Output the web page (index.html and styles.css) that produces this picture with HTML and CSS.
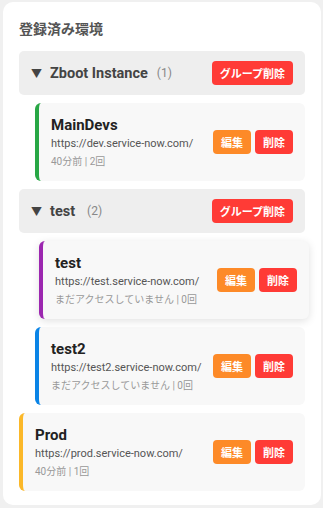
FILE: index.html
```html
<!DOCTYPE html>
<html lang="ja">
<head>
<meta charset="utf-8">
<link rel="stylesheet" href="styles.css">
</head>
<body>
<div class="card">
  <h2 class="title">登録済み環境</h2>
  <div class="list">
    <div class="group">
      <div class="group-header">
        <span class="caret">▼</span>
        <span class="group-name">Zboot Instance</span>
        <span class="group-count">(1)</span>
        <button class="btn btn-red btn-group">グループ削除</button>
      </div>
      <div class="group-items">
        <div class="env env-green">
          <div class="env-info">
            <div class="env-name">MainDevs</div>
            <div class="env-url">https://dev.service-now.com/</div>
            <div class="env-meta">40分前 | 2回</div>
          </div>
          <div class="env-actions">
            <button class="btn btn-orange">編集</button>
            <button class="btn btn-red">削除</button>
          </div>
        </div>
      </div>
    </div>
    <div class="group">
      <div class="group-header">
        <span class="caret">▼</span>
        <span class="group-name">test</span>
        <span class="group-count wide">(2)</span>
        <button class="btn btn-red btn-group">グループ削除</button>
      </div>
      <div class="group-items">
        <div class="env env-purple is-hover">
          <div class="env-info">
            <div class="env-name">test</div>
            <div class="env-url">https://test.service-now.com/</div>
            <div class="env-meta">まだアクセスしていません | 0回</div>
          </div>
          <div class="env-actions">
            <button class="btn btn-orange">編集</button>
            <button class="btn btn-red">削除</button>
          </div>
        </div>
        <div class="env env-blue">
          <div class="env-info">
            <div class="env-name">test2</div>
            <div class="env-url">https://test2.service-now.com/</div>
            <div class="env-meta">まだアクセスしていません | 0回</div>
          </div>
          <div class="env-actions">
            <button class="btn btn-orange">編集</button>
            <button class="btn btn-red">削除</button>
          </div>
        </div>
      </div>
    </div>
    <div class="env env-yellow">
      <div class="env-info">
        <div class="env-name">Prod</div>
        <div class="env-url">https://prod.service-now.com/</div>
        <div class="env-meta">40分前 | 1回</div>
      </div>
      <div class="env-actions">
        <button class="btn btn-orange">編集</button>
        <button class="btn btn-red">削除</button>
      </div>
    </div>
  </div>
</div>
</body>
</html>
```

FILE: styles.css
```css
* { box-sizing: border-box; }
html, body {
  margin: 0;
  background: #f0f0f0;
}
body {
  padding: 2px 2px 3px 3px;
  font-family: Roboto, "Noto Sans CJK JP", sans-serif;
  color: #333;
}
.card {
  background: #fff;
  border-radius: 10px;
  padding: 16px 16px 15px;
  height: 503px;
}
.title {
  margin: 2px 0 13px;
  font-size: 14px;
  line-height: 18px;
  font-weight: 700;
  color: #555;
}
.list, .group, .group-items {
  display: flex;
  flex-direction: column;
  gap: 8px;
}
.group-items {
  padding-left: 16px;
}
.group-header {
  display: flex;
  align-items: center;
  background: #eeeeee;
  border-radius: 5px;
  padding: 10px 12px;
}
.caret {
  font-size: 11px;
  color: #444;
  width: 11px;
  margin-right: 8px;
}
.group-name {
  font-size: 14.5px;
  font-weight: 700;
  color: #444;
}
.group-count {
  margin-left: 9px;
  font-size: 12px;
  color: #888;
}
.group-count.wide { margin-left: 12px; }
.btn-group { margin-left: auto; }
.btn {
  border: 0;
  border-radius: 4px;
  padding: 4px 8px;
  font-family: "Noto Sans CJK JP", sans-serif;
  font-size: 11px;
  line-height: 16px;
  font-weight: 700;
  color: #fff;
  cursor: pointer;
}
.btn-red { background: #ff3b36; }
.btn-orange { background: #fd8a28; }
.env {
  display: flex;
  align-items: center;
  background: #f8f8f8;
  border-left: 4px solid #ccc;
  border-radius: 6px;
  padding: 12px;
}
.env-green { border-left-color: #28a745; }
.env-purple { border-left-color: #9c27b0; }
.env-blue { border-left-color: #0a84e6; }
.env-yellow { border-left-color: #fbb829; }
.is-hover {
  transform: translateX(4px);
  box-shadow: 0 2px 8px rgba(0, 0, 0, 0.12);
}
.env-info {
  flex: 1;
  min-width: 0;
}
.env-name {
  font-size: 15px;
  line-height: 20px;
  font-weight: 700;
  color: #222;
  margin-bottom: 1px;
}
.env-url {
  font-size: 11px;
  line-height: 16px;
  color: #555;
  margin-bottom: 3px;
}
.env-meta {
  font-size: 10px;
  line-height: 14px;
  color: #999;
}
.env-actions {
  display: flex;
  gap: 4px;
}
```
